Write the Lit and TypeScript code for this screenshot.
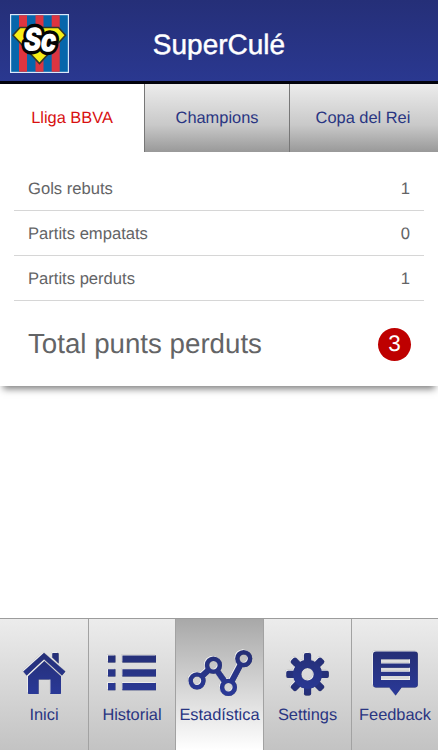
import { LitElement, html, svg, css } from "lit";
import { customElement } from "lit/decorators.js";
import { classMap } from "lit/directives/class-map.js";

const tooth = (angle: number) => svg`
  <rect x="303.4" y="653" width="7.2" height="14" rx="2" transform="rotate(${angle} 307 674.3)" />`;

const icons = {
  home: svg`
    <path d="M44 652.7 65.4 671.6 62 675.4 44 659.2 26.6 675.4 23.2 671.6Z" />
    <path d="M52.2 653.8q0-.8.8-.8h4.8q.8 0 .8.8v9.6L52.2 657.6Z" />
    <path d="M44.3 661 61 676.2V693q0 1-1 1H50.4V679.6H38.6V694H29q-1 0-1-1V676.2Z" />`,
  list: svg`
    <path d="M108 655.4h7.4v7.2H108zM108 669.2h7.4v7.2H108zM108 683h7.4v7.2H108z" />
    <path d="M122.4 655.4H156v7.2h-33.6zM122.4 669.2H156v7.2h-33.6zM122.4 683H156v7.2h-33.6z" />`,
  chart: svg`
    <g fill="none" stroke="url(#ink-chart)" stroke-width="4.4">
      <circle cx="197" cy="680.8" r="6.4" /><circle cx="213.4" cy="665.2" r="6.4" />
      <circle cx="228.4" cy="687.3" r="6.4" /><circle cx="243.7" cy="658.6" r="6.4" />
      <path stroke-width="5.8" d="M202 676 208.5 670M217 670.6 225 682M231.5 681.6 240.8 664.2" />
    </g>`,
  gear: svg`
    ${[0, 45, 90, 135, 180, 225, 270, 315].map(tooth)}
    <path fill-rule="evenodd" d="M307 659.8a14.5 14.5 0 1 1 0 29a14.5 14.5 0 1 1 0-29ZM307 668.1a6.2 6.2 0 1 0 0 12.4a6.2 6.2 0 1 0 0-12.4Z" />`,
  chat: svg`
    <path fill-rule="evenodd" d="M376 651.4H414.8q3 0 3 3V684.6q0 3-3 3H401.6L395.6 695.6 389.2 687.6H376q-3 0-3-3V654.4q0-3 3-3ZM381 659.3V663.4H410V659.3ZM381 667.7V671.8H410V667.7ZM381 676V680.1H410V676Z" />`,
};

type IconName = keyof typeof icons;

const nav: { icon: IconName; label: string; x: number; active?: boolean }[] = [
  { icon: "home", label: "Inici", x: 8 },
  { icon: "list", label: "Historial", x: 96 },
  { icon: "chart", label: "Estadística", x: 184, active: true },
  { icon: "gear", label: "Settings", x: 271.5 },
  { icon: "chat", label: "Feedback", x: 359 },
];

const tabs = ["Lliga BBVA", "Champions", "Copa del Rei"];

const stats = [
  ["Gols rebuts", "1"],
  ["Partits empatats", "0"],
  ["Partits perduts", "1"],
];

@customElement("app-root")
export class AppRoot extends LitElement {
  static styles = css`
    :host {
      display: flex;
      flex-direction: column;
      height: 750px;
      background: #fff;
      color: #636466;
      font-family: "Liberation Sans", Arial, sans-serif;
      font-size: 16.6px;
      text-rendering: geometricPrecision;
      overflow: hidden;
    }
    * { box-sizing: border-box; }
    .header {
      flex: none;
      height: 84px;
      padding: 4px 10px 0;
      display: grid;
      grid-template-columns: 59px 1fr 59px;
      align-items: center;
      background: linear-gradient(#252f78, #2a3890);
      border-bottom: 3px solid #02020c;
    }
    .logo { display: block; margin-top: 2px; }
    .mark {
      font-family: Inter, "Open Sans", sans-serif;
      font-weight: 900;
      font-size: 32px;
      letter-spacing: -1px;
      paint-order: stroke;
      stroke-linejoin: round;
    }
    .title {
      margin: 4px 0 0;
      text-align: center;
      color: #fff;
      font-size: 28px;
      font-weight: 400;
      line-height: 32px;
      -webkit-text-stroke: 0.45px #fff;
    }
    .card {
      flex: none;
      height: 302px;
      background: #fff;
      box-shadow: 0 6px 7px -3px rgba(0, 0, 0, 0.5);
    }
    .tabs {
      display: grid;
      grid-template-columns: 144px 145px 149px;
      height: 68px;
    }
    .tab {
      display: flex;
      align-items: center;
      justify-content: center;
      color: #293582;
      background: linear-gradient(#ececec, #c9c9c9 60%, #999);
      border-left: 1px solid #777;
      font-size: 16.4px;
    }
    .tab:last-child { padding-right: 2px; }
    .tab.active { background: #fff; color: #d8100f; border: 0; }
    .rows { padding: 14px 14px 0; }
    .row {
      display: flex;
      justify-content: space-between;
      align-items: center;
      height: 45px;
      padding: 2px 14px 0;
      border-bottom: 1px solid #d6d6d6;
    }
    .total {
      display: flex;
      justify-content: space-between;
      align-items: center;
      height: 85px;
      padding: 1px 27px 0 28px;
      font-size: 27.7px;
    }
    .badge {
      display: flex;
      align-items: center;
      justify-content: center;
      width: 33px;
      height: 33px;
      border-radius: 50%;
      background: #be0000;
      color: #fff;
      font-size: 22.5px;
    }
    .nav {
      display: grid;
      grid-template-columns: 89px 87px 88px 88px 86px;
      height: 132px;
      margin-top: auto;
      border-top: 1px solid #9c9c9c;
    }
    .item {
      display: flex;
      flex-direction: column;
      align-items: center;
      padding-top: 26px;
      color: #293582;
      font-size: 16.4px;
      line-height: 20px;
      white-space: nowrap;
      background: linear-gradient(#ececec, #c3c3c3);
      border-right: 1px solid #a2a2a2;
    }
    .item:last-child { border-right: 0; }
    .item.active { background: linear-gradient(#a8a8a8, #fff); }
    .icon {
      flex: none;
      display: block;
      margin-bottom: 4px;
      filter: drop-shadow(-1px -1px 0.7px rgba(255, 255, 255, 0.85))
        drop-shadow(0.7px 0.7px 0.6px rgba(0, 0, 0, 0.5));
    }
  `;

  renderLogo() {
    return html`<svg class="logo" width="59" height="59" viewBox="10 14 59 59">
      <rect x="10" y="14" width="59" height="59" fill="#dce9fa" />
      <rect x="11.2" y="15.2" width="56.6" height="56.6" fill="#0766ab" />
      <path fill="#dd3540" d="M19 15.2h8v56.6h-8zM35.5 15.2h8v56.6h-8zM51.7 15.2h8v56.6h-8z" />
      <path d="M20 27.5H58.5L65.5 35.3 39.5 63.5 13 35.3Z" fill="#f7ee16" stroke="#34362b" stroke-width="1.6" />
      <text class="mark" transform="translate(22.6 50.2) rotate(3) skewX(-6) scale(.82 1)" fill="#fff" stroke="#050505" stroke-width="7">Sc</text>
    </svg>`;
  }

  renderIcon(name: IconName, x: number) {
    return html`<svg class="icon" width="72" height="56" viewBox="${x} 645 72 56" fill="url(#ink-${name})">
      <linearGradient id="ink-${name}" gradientUnits="userSpaceOnUse" x1="0" y1="652" x2="0" y2="695">
        <stop stop-color="#252f76" />
        <stop offset="1" stop-color="#2a3998" />
      </linearGradient>
      ${icons[name]}
    </svg>`;
  }

  render() {
    return html`
      <header class="header">
        ${this.renderLogo()}
        <h1 class="title">SuperCulé</h1>
      </header>
      <section class="card">
        <div class="tabs">
          ${tabs.map((t, i) => html`<div class=${classMap({ tab: true, active: i === 0 })}>${t}</div>`)}
        </div>
        <div class="rows">
          ${stats.map(([k, v]) => html`<div class="row"><span>${k}</span><span>${v}</span></div>`)}
        </div>
        <div class="total"><span>Total punts perduts</span><span class="badge">3</span></div>
      </section>
      <nav class="nav">
        ${nav.map(
          (n) => html`<div class=${classMap({ item: true, active: !!n.active })}>
            ${this.renderIcon(n.icon, n.x)}<span>${n.label}</span>
          </div>`
        )}
      </nav>
    `;
  }
}
